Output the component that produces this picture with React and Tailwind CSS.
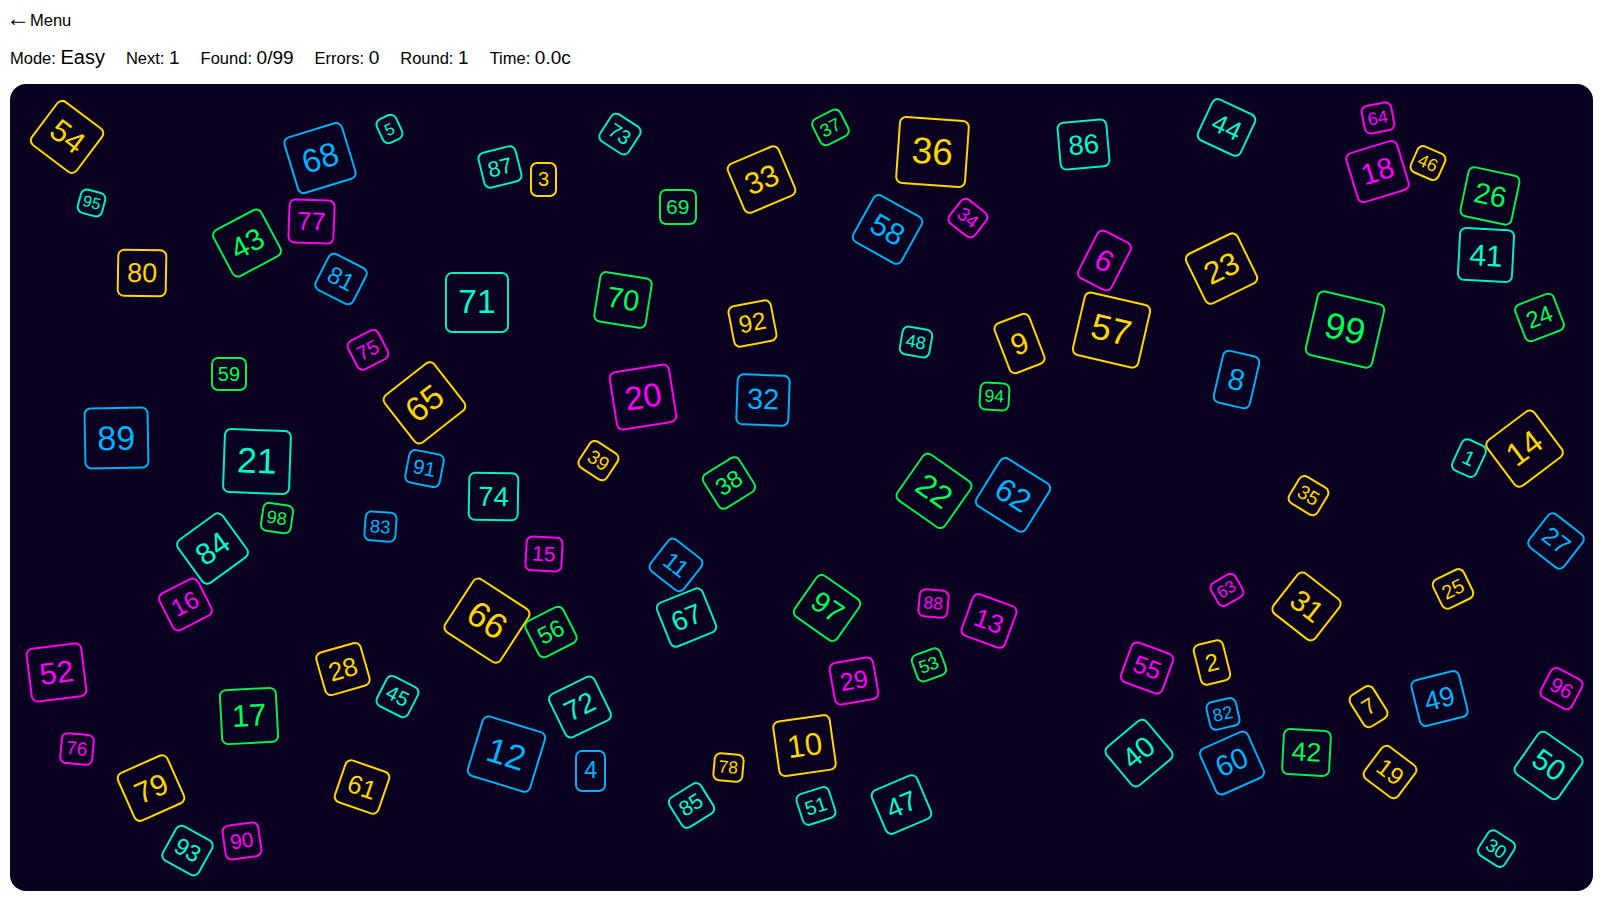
import React from 'react';

const colors = {
  y: 'border-[#ffd700] text-[#ffd700]',
  t: 'border-[#00f0c0] text-[#00ffc8]',
  g: 'border-[#00f050] text-[#00ff55]',
  m: 'border-[#ff00f0] text-[#ff00ff]',
  b: 'border-[#00b0f5] text-[#00b4ff]',
};

// n, center x, center y, font size, rotation, colour (page coordinates)
const tiles = [
  [54, 67, 136.5, 31, 37, 'y'], [95, 92, 203, 16, 15, 't'], [80, 142, 273, 27, 1, 'y'],
  [43, 247.5, 243, 30, -28, 'g'], [77, 311.5, 221, 25.5, 2, 'm'], [59, 229, 374, 20, 0, 'g'],
  [89, 116, 438, 34, -1, 'b'], [21, 256.5, 461, 35.5, 2, 't'], [68, 320, 158, 33, -17, 'b'],
  [5, 389, 129, 16.5, -25, 't'], [87, 499.5, 167, 22, -14, 't'], [3, 543.5, 179, 20, 0, 'y'],
  [73, 620, 133.7, 20, 33, 't'], [71, 477, 302, 33.5, 0, 't'], [70, 623, 300, 29, 9, 'g'],
  [81, 341, 279, 24, 27, 'b'], [75, 367.5, 349.5, 20, -27, 'm'], [65, 424.7, 402.5, 34, -38, 'y'],
  [91, 424.7, 468, 20.5, 11, 'b'], [74, 494, 496, 27.5, 1, 't'], [39, 598, 460, 19.5, 33, 'y'],
  [20, 643.5, 396.5, 33, -9, 'm'], [69, 677.7, 207, 21, 0, 'g'], [33, 761.7, 179, 30.5, -23, 'y'],
  [37, 830.8, 127.5, 18.5, -27, 'g'], [36, 932.5, 152, 37, 4, 'y'], [58, 887.5, 229.7, 30.5, 29, 'b'],
  [34, 968, 218, 19, 38, 'm'], [92, 752, 323, 24.5, -11, 'y'], [32, 762.8, 399.5, 29, 2, 'b'],
  [48, 916, 341.7, 18, 10, 't'], [38, 728.8, 482.5, 24, -32, 'g'], [22, 934, 491, 32, 35, 'g'],
  [86, 1083.5, 144, 27.5, -5, 't'], [44, 1227, 127.3, 26.5, 25, 't'], [6, 1104.7, 260, 30, 27, 'm'],
  [23, 1222, 268, 31.5, -26, 'y'], [9, 1019, 343.7, 30, -21, 'y'], [57, 1111.3, 329.7, 36, 13, 'y'],
  [8, 1236.7, 379.7, 30, 13, 'b'], [94, 994.5, 396.7, 17.5, 3, 'g'], [62, 1013, 495, 32, 32, 'b'],
  [64, 1377.5, 117.8, 18, -11, 'm'], [18, 1378, 171, 29.5, -17, 'm'], [46, 1427.7, 162.8, 18, 24, 'y'],
  [26, 1489.7, 196, 29, 12, 'g'], [41, 1486.5, 255, 30, 3, 't'], [99, 1345, 329.7, 36.5, 13, 'g'],
  [24, 1539, 317, 23.5, -21, 'g'], [1, 1468.7, 458, 20.5, 25, 't'], [14, 1524.5, 448.7, 32.5, -37, 'y'],
  [35, 1308, 495, 19.5, 31, 'y'], [84, 212.8, 548.8, 30.5, -36, 't'], [98, 276.8, 518, 18, 8, 'g'],
  [16, 185.3, 604.3, 24.5, -27, 'm'], [52, 56.7, 672, 30.5, -7, 'm'], [17, 249, 715.8, 31, -3, 'g'],
  [76, 76.7, 748.8, 19, 5, 'm'], [79, 151.3, 788.3, 30, -24, 'y'], [93, 187.7, 850.7, 23.5, 29, 't'],
  [90, 241.7, 840.5, 21, -8, 'm'], [83, 380.7, 526.7, 18.5, 4, 'b'], [15, 544.2, 554, 21, 3, 'm'],
  [66, 486.8, 620.8, 35.5, 33, 'y'], [56, 551.2, 632, 24, -27, 'g'], [28, 342.8, 669, 26, -16, 'y'],
  [45, 397.2, 696.7, 20.5, 27, 't'], [72, 579.8, 707.2, 28, -26, 't'], [12, 506.3, 754, 35, 17, 'b'],
  [4, 590.7, 770.8, 23.5, 0, 'b'], [61, 361.7, 787, 26, 19, 'y'], [11, 675.8, 565.2, 24, 38, 'b'],
  [67, 686.3, 617.5, 27.5, -22, 't'], [97, 826.7, 608, 29, 35, 'g'], [88, 932.8, 603.8, 17.5, 5, 'm'],
  [53, 928.5, 665, 18, -20, 'g'], [29, 853.5, 681.2, 25, -10, 'm'], [10, 804.8, 745, 31.5, -8, 'y'],
  [78, 728.3, 767, 17.5, 5, 'y'], [85, 691.5, 805.5, 21.5, -32, 't'], [51, 816.3, 805.7, 20, -18, 't'],
  [47, 901.7, 804, 27.5, -23, 't'], [13, 989, 620.7, 26, 20, 'm'], [63, 1226.7, 589.7, 17, -30, 'm'],
  [55, 1146.7, 667.5, 25, 20, 'm'], [2, 1212.3, 662, 24, -14, 'y'], [82, 1222.8, 714.2, 18, -13, 'b'],
  [40, 1139, 753, 29, -40, 't'], [60, 1232.3, 763, 29, -24, 'b'], [31, 1306.5, 606.3, 29.5, 38, 'y'],
  [25, 1452.5, 588.8, 20, -26, 'y'], [27, 1555.5, 540.5, 25, 38, 'b'], [7, 1368.7, 706.8, 22, -32, 'y'],
  [49, 1440, 698.3, 27.5, -14, 'b'], [42, 1306.7, 752, 26.5, 3, 'g'], [19, 1389.5, 771.7, 24, 37, 'y'],
  [96, 1561.5, 688.7, 20.5, 28, 'm'], [50, 1549, 765.5, 29.5, 35, 't'], [30, 1496.7, 848.7, 18.5, 33, 't'],
];

const PANEL_X = 10;
const PANEL_Y = 84;

const Tile = ({ n, x, y, size, rot, color }) => {
  const w = n < 10 ? 1.2 * size + 3 : 2.06 * size - 5.5;
  const h = n < 10 ? 2 * size - 5 : 2 * size - 6;
  return (
    <div
      className={`absolute flex items-center justify-center rounded-[7px] border-2 bg-[#0a0020] ${colors[color]}`}
      style={{
        left: x - PANEL_X - w / 2,
        top: y - PANEL_Y - h / 2,
        width: w,
        height: h,
        fontSize: size,
        transform: `rotate(${rot}deg)`,
      }}
    >
      {n}
    </div>
  );
};

const Stat = ({ label, value, big }) => (
  <span>
    {label} <span className={big ? 'text-[20px]' : 'text-[19px]'}>{value}</span>
  </span>
);

export default function App() {
  return (
    <div className="flex h-screen w-full flex-col bg-white pb-[9px] pl-[10px] pr-[7px] font-['Liberation_Sans',Arial,sans-serif] text-black">
      <div className="flex h-[41px] items-center text-[16.5px]">
        <a className="flex items-center">
          <span className="-ml-[4px] mb-[5px] text-[24px] leading-none">←</span>
          <span>Menu</span>
        </a>
      </div>
      <div className="flex h-[43px] items-baseline gap-[21px] pt-[1px] text-[16.5px]">
        <Stat label="Mode:" value="Easy" big />
        <Stat label="Next:" value="1" />
        <Stat label="Found:" value="0/99" />
        <Stat label="Errors:" value="0" />
        <Stat label="Round:" value="1" />
        <Stat label="Time:" value="0.0c" />
      </div>
      <div className="relative flex-1 overflow-hidden rounded-2xl bg-[#0a0020]">
        {tiles.map(([n, x, y, size, rot, color]) => (
          <Tile key={n} n={n} x={x} y={y} size={size} rot={rot} color={color} />
        ))}
      </div>
    </div>
  );
}
